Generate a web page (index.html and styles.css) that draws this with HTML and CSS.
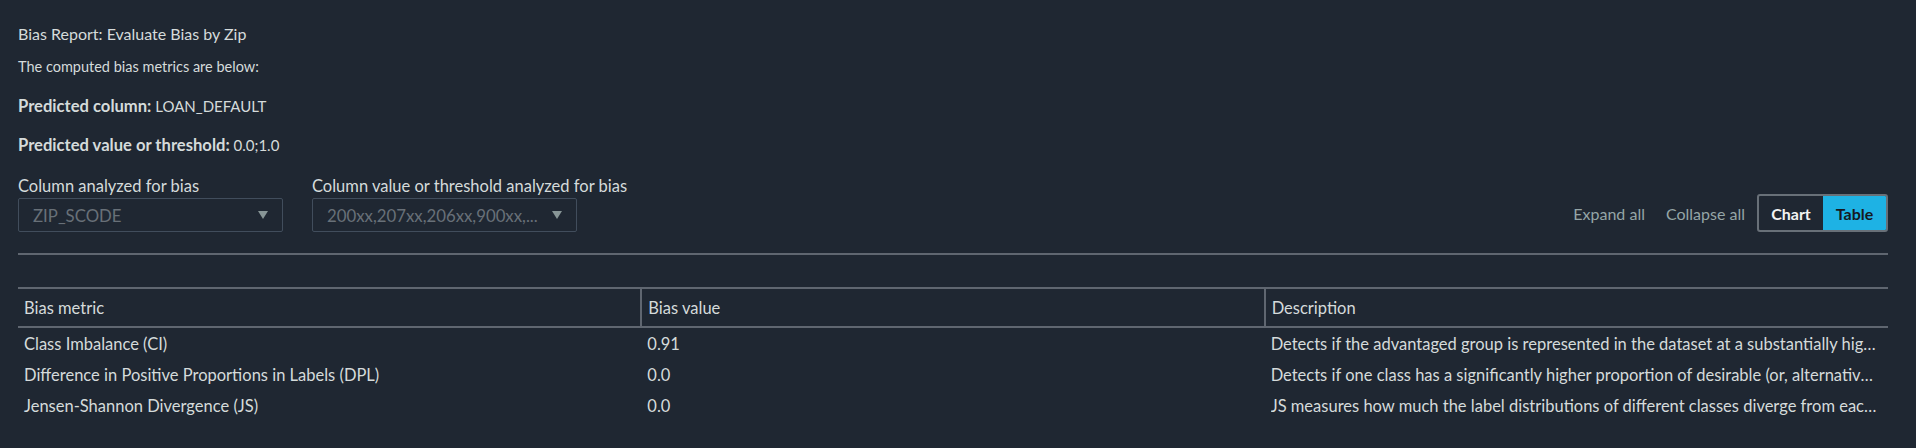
FILE: index.html
```html
<!DOCTYPE html>
<html>
<head>
<meta charset="utf-8">
<link rel="stylesheet" href="styles.css">
</head>
<body>
<div class="page">
  <div class="title">Bias Report: Evaluate Bias by Zip</div>
  <div class="intro">The computed bias metrics are below:</div>
  <div class="meta"><b>Predicted column:</b> LOAN_DEFAULT</div>
  <div class="meta"><b>Predicted value or threshold:</b> 0.0;1.0</div>

  <div class="controls">
    <div class="field">
      <div class="label">Column analyzed for bias</div>
      <div class="select"><span class="select-text">ZIP_SCODE</span><span class="caret"></span></div>
    </div>
    <div class="field">
      <div class="label">Column value or threshold analyzed for bias</div>
      <div class="select"><span class="select-text">200xx,207xx,206xx,900xx,...</span><span class="caret"></span></div>
    </div>
    <div class="spacer"></div>
    <div class="actions">
      <span class="link">Expand all</span>
      <span class="link">Collapse all</span>
      <div class="toggle">
        <span class="seg">Chart</span>
        <span class="seg seg-active">Table</span>
      </div>
    </div>
  </div>

  <div class="divider"></div>

  <table class="grid">
    <thead>
      <tr><th>Bias metric</th><th>Bias value</th><th>Description</th></tr>
    </thead>
    <tbody>
      <tr><td>Class Imbalance (CI)</td><td>0.91</td><td><div class="clip">Detects if the advantaged group is represented in the dataset at a substantially higher rate than the disadvantaged group, or vice versa.</div></td></tr>
      <tr><td>Difference in Positive Proportions in Labels (DPL)</td><td>0.0</td><td><div class="clip">Detects if one class has a significantly higher proportion of desirable (or, alternatively, undesirable) outcomes in the training data.</div></td></tr>
      <tr><td>Jensen-Shannon Divergence (JS)</td><td>0.0</td><td><div class="clip">JS measures how much the label distributions of different classes diverge from each other entropically.</div></td></tr>
    </tbody>
  </table>
</div>
</body>
</html>
```

FILE: styles.css
```css
html, body {
  margin: 0;
  padding: 0;
  background: #1f2732;
}
body {
  font-family: Lato, "Noto Sans", sans-serif;
  color: #d5dbdb;
  font-size: 16px;
}
.page {
  padding: 24px 28px 0 18px;
}
.title {
  font-size: 16px;
  line-height: 20px;
  height: 20px;
}
.intro {
  font-size: 14.5px;
  line-height: 20px;
  height: 20px;
  margin-top: 13px;
}
.meta {
  font-size: 15px;
  line-height: 20px;
  height: 20px;
  margin-top: 19px;
  white-space: nowrap;
}
.meta b {
  font-weight: 700;
  font-size: 16.6px;
  line-height: 20px;
}
.controls {
  display: flex;
  align-items: flex-end;
  margin-top: 21px;
}
.field {
  display: flex;
  flex-direction: column;
  margin-right: 29px;
}
.label {
  font-size: 16.5px;
  line-height: 20px;
  height: 20px;
  margin-bottom: 2px;
  white-space: nowrap;
}
.select {
  width: 265px;
  height: 34px;
  box-sizing: border-box;
  border: 1px solid #414d5c;
  border-radius: 2px;
  display: flex;
  align-items: center;
  padding: 0 14px 0 14px;
  color: #687078;
}
.select-text {
  flex: 1;
  min-width: 0;
  font-size: 16.8px;
  white-space: nowrap;
  overflow: hidden;
}
.caret {
  flex: none;
  width: 0;
  height: 0;
  margin-left: 6px;
  border-left: 5px solid transparent;
  border-right: 5px solid transparent;
  border-top: 8px solid #879596;
}
.spacer {
  flex: 1;
}
.actions {
  display: flex;
  align-items: center;
  height: 38px;
}
.link {
  color: #95a5a6;
  font-size: 16px;
  margin-right: 21px;
}
.link + .link {
  margin-right: 12px;
}
.toggle {
  display: flex;
  border: 2px solid #687078;
  border-radius: 3px;
  height: 38px;
  box-sizing: border-box;
  overflow: hidden;
}
.seg {
  width: 64px;
  display: flex;
  align-items: center;
  justify-content: center;
  font-weight: 700;
  font-size: 16px;
  color: #f2f3f3;
}
.seg-active {
  background: #1eb2e4;
  color: #16191f;
  width: 63px;
}
.divider {
  height: 2px;
  background: #5f6670;
  margin-top: 21px;
}
.grid {
  width: 100%;
  margin-top: 32px;
  border-collapse: collapse;
  table-layout: fixed;
}
.grid th,
.grid td {
  font-size: 16.5px;
}
.grid th {
  text-align: left;
  font-weight: 400;
  height: 37px;
  padding: 0 6px;
  border-top: 2px solid #5f6670;
  border-bottom: 2px solid #5f6670;
  border-left: 2px solid #5f6670;
}
.grid th:first-child {
  border-left: none;
}
.grid td {
  height: 31px;
  padding: 0 6px;
  white-space: nowrap;
}
.clip {
  overflow: hidden;
  text-overflow: ellipsis;
  white-space: nowrap;
  padding-right: 4px;
}
```
